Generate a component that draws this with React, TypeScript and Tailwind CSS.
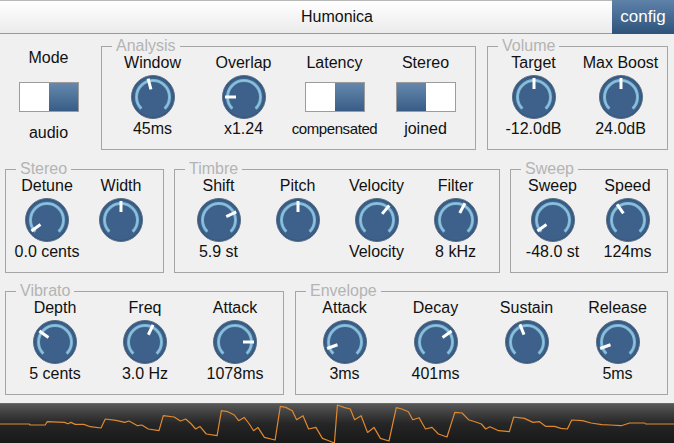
import React from "react";

// waveform samples, traced in a 1568 x 144 grid (strip starts at y=25)
const WAVE: [number, number][] = [
  [0, 85], [68, 85], [70, 88], [105, 88], [110, 78], [150, 80], [158, 84], [165, 80], [175, 86], [195, 86],
  [210, 93], [235, 97], [245, 70], [270, 74], [290, 80], [300, 76], [320, 90], [330, 88], [345, 100], [370, 105],
  [380, 60], [405, 64], [420, 76], [432, 70], [445, 85], [455, 100], [465, 92], [480, 115], [505, 120],
  [515, 45], [530, 48], [545, 58], [555, 75], [568, 65], [580, 85], [590, 105], [600, 95], [615, 125], [640, 133],
  [652, 32], [665, 35], [680, 45], [690, 72], [705, 60], [718, 100], [735, 95], [750, 128], [765, 135], [778, 142],
  [785, 28], [800, 35], [815, 40], [825, 72], [840, 60], [855, 110], [870, 95], [885, 128], [905, 136],
  [922, 36], [935, 40], [950, 48], [960, 72], [975, 66], [990, 100], [1005, 95], [1020, 115], [1040, 124],
  [1058, 50], [1075, 52], [1090, 72], [1105, 78], [1120, 85], [1130, 100], [1140, 93], [1160, 105], [1185, 108],
  [1195, 64], [1220, 68], [1240, 80], [1255, 78], [1270, 92], [1290, 92], [1305, 98], [1320, 100],
  [1330, 73], [1355, 75], [1375, 82], [1400, 87], [1420, 88], [1445, 90], [1465, 82], [1500, 82], [1502, 85], [1568, 85],
];

function Knob({ angle }: { angle: number }) {
  const c = 22;
  const r = 16.5;
  const a0 = (-135 * Math.PI) / 180;
  const a1 = (135 * Math.PI) / 180;
  const p = (rad: number, rr: number) => [c + rr * Math.sin(rad), c - rr * Math.cos(rad)];
  const [sx, sy] = p(a0, r);
  const [ex, ey] = p(a1, r);
  const t = (angle * Math.PI) / 180;
  const [x1, y1] = p(t, 8);
  const [x2, y2] = p(t, 19);
  return (
    <svg width="44" height="44" viewBox="0 0 44 44">
      <circle cx={c} cy={c} r="21.5" fill="#34567d" stroke="#5a6f86" strokeWidth="1" />
      <circle cx={c} cy={c} r="20" fill="#3d618a" />
      <path d={`M${sx} ${sy} A${r} ${r} 0 1 1 ${ex} ${ey}`} fill="none" stroke="#7db5d4" strokeWidth="3" />
      <path d={`M${sx} ${sy} A${r} ${r} 0 1 1 ${ex} ${ey}`} fill="none" stroke="#a9d3e6" strokeWidth="0.8" opacity="0.7" />
      <line x1={x1} y1={y1} x2={x2} y2={y2} stroke="#ffffff" strokeWidth="3" />
    </svg>
  );
}

function Toggle({ on }: { on: "left" | "right" }) {
  const blue = "bg-linear-to-b from-[#6688ad] to-[#385d86]";
  return (
    <div className="flex w-[60px] h-[30px] border border-[#9c9c9c]">
      <div className={`flex-1 ${on === "left" ? blue : "bg-white"}`} />
      <div className={`flex-1 ${on === "right" ? blue : "bg-white"}`} />
    </div>
  );
}

function Control({
  label,
  value,
  width,
  children,
  valueClass = "",
}: {
  label: string;
  value?: string;
  width: string;
  children: React.ReactNode;
  valueClass?: string;
}) {
  return (
    <div className={`flex flex-col items-center ${width}`}>
      <div className="h-[18px] leading-[18px] whitespace-nowrap">{label}</div>
      <div className="mt-[3px] h-[44px] flex items-center justify-center">{children}</div>
      <div className={`mt-[1px] h-[18px] leading-[18px] whitespace-nowrap ${valueClass}`}>{value}</div>
    </div>
  );
}

function Group({
  title,
  className,
  inner,
  children,
}: {
  title: string;
  className: string;
  inner: string;
  children: React.ReactNode;
}) {
  return (
    <fieldset className={`border border-[#a5a5a5] ${className}`}>
      <legend className="ml-[10px] px-[4px] leading-[18px] text-[#b4b4b4]">{title}</legend>
      <div className={`flex -mt-[1px] pb-[11px] ${inner}`}>{children}</div>
    </fieldset>
  );
}

export default function App() {
  const pts = WAVE.map(([x, y]) => `${((x / 1568) * 674).toFixed(1)},${(y / 3 - 8.3).toFixed(1)}`).join(" ");

  return (
    <div className="w-[674px] h-[443px] overflow-hidden flex flex-col bg-[#f0f0f0] text-[16px] text-[#111] font-['Liberation_Sans',Arial,sans-serif]">
      {/* Title bar */}
      <div className="h-[34px] flex border-t border-b border-t-[#b8b8b8] border-b-[#9a9a9a] bg-linear-to-b from-white to-[#ebebeb]">
        <div className="w-[62px]" />
        <div className="flex-1 flex items-center justify-center text-[16px] text-[#111]">Humonica</div>
        <div className="w-[62px] -my-px flex items-center justify-center text-[17px] text-white bg-linear-to-b from-[#5f82a9] to-[#2e537b]">
          config
        </div>
      </div>

      {/* Row 1 */}
      <div className="flex mt-[3px]">
        <div className="w-[97px] flex flex-col items-center">
          <div className="mt-[12px] h-[18px] leading-[18px]">Mode</div>
          <div className="mt-[15px]">
            <Toggle on="right" />
          </div>
          <div className="mt-[12px] h-[18px] leading-[18px]">audio</div>
        </div>
        <Group title="Analysis" className="ml-[4px] w-[375px]" inner="pl-[5px]">
          <Control label="Window" value="45ms" width="w-[91px]">
            <Knob angle={-15} />
          </Control>
          <Control label="Overlap" value="x1.24" width="w-[91px]">
            <Knob angle={-90} />
          </Control>
          <Control label="Latency" value="compensated" width="w-[91px]" valueClass="text-[15px] tracking-[-0.4px]">
            <Toggle on="right" />
          </Control>
          <Control label="Stereo" value="joined" width="w-[91px]">
            <Toggle on="left" />
          </Control>
        </Group>
        <Group title="Volume" className="ml-[11px] w-[181px]" inner="pl-[2px]">
          <Control label="Target" value="-12.0dB" width="w-[87px]">
            <Knob angle={0} />
          </Control>
          <Control label="Max Boost" value="24.0dB" width="w-[87px]">
            <Knob angle={0} />
          </Control>
        </Group>
      </div>

      {/* Row 2 */}
      <div className="flex mt-[10px] pl-[5px]">
        <Group title="Stereo" className="w-[159px]" inner="pl-[4px]">
          <Control label="Detune" value="0.0 cents" width="w-[74px]">
            <Knob angle={-125} />
          </Control>
          <Control label="Width" width="w-[74px]">
            <Knob angle={0} />
          </Control>
        </Group>
        <Group title="Timbre" className="ml-[10px] w-[326px]" inner="pl-[4px]">
          <Control label="Shift" value="5.9 st" width="w-[79px]">
            <Knob angle={65} />
          </Control>
          <Control label="Pitch" width="w-[79px]">
            <Knob angle={0} />
          </Control>
          <Control label="Velocity" value="Velocity" width="w-[79px]">
            <Knob angle={40} />
          </Control>
          <Control label="Filter" value="8 kHz" width="w-[79px]">
            <Knob angle={28} />
          </Control>
        </Group>
        <Group title="Sweep" className="ml-[10px] w-[158px]" inner="pl-[4px]">
          <Control label="Sweep" value="-48.0 st" width="w-[75px]">
            <Knob angle={-125} />
          </Control>
          <Control label="Speed" value="124ms" width="w-[75px]">
            <Knob angle={-35} />
          </Control>
        </Group>
      </div>

      {/* Row 3 */}
      <div className="flex mt-[9px] pl-[5px]">
        <Group title="Vibrato" className="w-[279px]" inner="pl-[4px]">
          <Control label="Depth" value="5 cents" width="w-[90px]">
            <Knob angle={-55} />
          </Control>
          <Control label="Freq" value="3.0 Hz" width="w-[90px]">
            <Knob angle={25} />
          </Control>
          <Control label="Attack" value="1078ms" width="w-[90px]">
            <Knob angle={90} />
          </Control>
        </Group>
        <Group title="Envelope" className="ml-[11px] w-[373px]" inner="pl-[3px]">
          <Control label="Attack" value="3ms" width="w-[91px]">
            <Knob angle={-110} />
          </Control>
          <Control label="Decay" value="401ms" width="w-[91px]">
            <Knob angle={55} />
          </Control>
          <Control label="Sustain" width="w-[91px]">
            <Knob angle={-22} />
          </Control>
          <Control label="Release" value="5ms" width="w-[91px]">
            <Knob angle={-110} />
          </Control>
        </Group>
      </div>

      {/* Waveform */}
      <div className="mt-auto h-[40px] border-t border-[#6a6a6a] bg-linear-to-b from-[#575757] via-[#262626] via-50% to-[#181818]">
        <svg width="674" height="39" viewBox="0 0 674 39" className="block">
          <polyline points={pts} fill="none" stroke="#e0892e" strokeWidth="1.2" strokeLinejoin="round" />
        </svg>
      </div>
    </div>
  );
}
